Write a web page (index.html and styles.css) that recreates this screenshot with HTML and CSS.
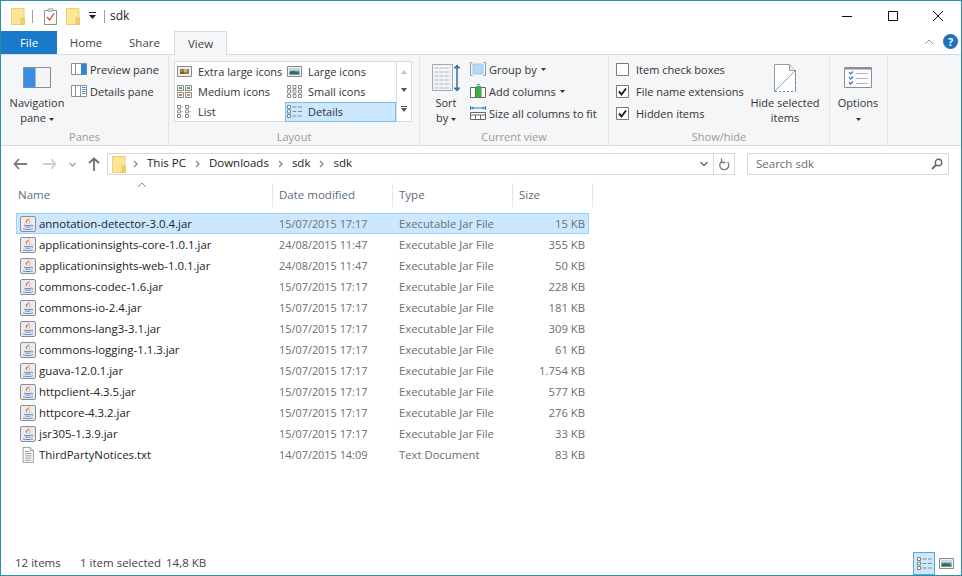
FILE: index.html
```html
<!DOCTYPE html>
<html lang="en-US">
	<head>
		<title>sdk</title>
		<link rel="stylesheet" href="styles.css">
	</head>
	<body>
		<svg class="defs" width="0" height="0">
			<symbol id="folder" viewBox="0 0 14 18">
				<path d="M.5 1.500h12.500v16H.5z" fill="#fde594" stroke="#e8cf83"/>
				<path d="M10 11h3.500v6.500H10z" fill="#f3cf6a" stroke="#dcb95a" stroke-width=".6"/>
			</symbol>
			<symbol id="jar" viewBox="0 0 16 16">
				<rect x=".5" y=".5" width="15" height="15" rx="1.500" fill="#e8edf5" stroke="#8a8c92"/>
				<path d="M9.500 1.500c1 2.200-3.500 3.300-2.500 5.500.3.600.8 1 1.200 1.600C6.800 7.500 4.800 6 6.200 4.300 7.200 3.300 9.500 2.900 9.500 1.500z" fill="#e2701a"/>
				<path d="M11 4C9.300 5 8.600 6.500 9.700 8.600 9.400 7 9.800 5.500 11 4z" fill="#e2701a"/>
				<path d="M4 9.200c2 .6 6 .6 7.500-.2M5 11c1.500.4 4 .4 5.500 0M3 13c3 .8 7 .8 10-.2" fill="none" stroke="#5b7fb5" stroke-width=".9"/>
				<path d="M11.500 9.200c1.500-.4 1.800 1.200 0 1.600" fill="none" stroke="#5b7fb5" stroke-width=".8"/>
			</symbol>
			<symbol id="txt" viewBox="0 0 16 18">
				<path d="M2.500.5h8l3.500 3.500v13.500H2.500z" fill="#fff" stroke="#8f8f8f"/>
				<path d="M10.500.5V4H14" fill="#eee" stroke="#8f8f8f"/>
				<path d="M4.500 5h5M4.500 7.500h7.500M4.500 10h7.500M4.500 12.500h7.500M4.500 15h7.500" stroke="#8a8a8a"/>
			</symbol>
			<symbol id="pane-preview" viewBox="0 0 16 12">
				<path d="M.5.500h15v11H.5z" fill="#fff" stroke="#8a8f96"/>
				<path d="M4.500 1v10" stroke="#8a8f96"/>
				<path d="M10 1h5.500v10.500H10z" fill="#2f84d4"/>
			</symbol>
			<symbol id="pane-details" viewBox="0 0 16 12">
				<path d="M.5.500h15v11H.5z" fill="#fff" stroke="#8a8f96"/>
				<path d="M4.500 1v10M9.500 1v10" stroke="#8a8f96"/>
				<path d="M11 2.500h3.500M11 4.500h3.500M11 6.500h3.500M11 8.500h3.500" stroke="#2f84d4"/>
			</symbol>
			<symbol id="view-xl" viewBox="0 0 15 11">
				<path d="M.5.500h14v10H.5z" fill="#eee" stroke="#8a8a8a"/>
				<path d="M3 3h9v5H3z" fill="#7d8a55"/>
				<path d="M7 3h3v3H7z" fill="#e0b83c"/>
				<path d="M3 6h4v2H3z" fill="#a0522d"/>
			</symbol>
			<symbol id="view-lg" viewBox="0 0 15 11">
				<path d="M.5.500h14v10H.5z" fill="#f4f4f4" stroke="#8a8a8a"/>
				<path d="M2.500 2.500h10v6h-10z" fill="#5f97b8"/>
				<path d="M2.500 2.500h10v2h-10z" fill="#cfe2ec"/>
				<path d="M2.500 6l4-1 6 2v1.500h-10z" fill="#3e6a52"/>
			</symbol>
			<symbol id="view-md" viewBox="0 0 15 13">
				<path d="M.5.500h6v5h-6zM8.500.500h6v5h-6zM.5 7.500h6v5h-6zM8.500 7.500h6v5h-6z" fill="#f4f4f4" stroke="#8a8a8a"/>
				<path d="M2 2h3v2H2z" fill="#6f9a57"/>
				<path d="M10 2h3v2h-3z" fill="#6f9a57"/>
				<path d="M2 9h3v2H2z" fill="#c9803c"/>
				<path d="M10 9h3v2h-3z" fill="#b8a048"/>
			</symbol>
			<symbol id="view-sm" viewBox="0 0 15 13">
				<path d="M.5.500h3v3h-3zM6 .500h3v3H6zM11.500.500h3v3h-3zM.5 5h3v3h-3zM6 5h3v3H6zM11.500 5h3v3h-3zM.5 9.500h3v3h-3zM6 9.500h3v3H6zM11.500 9.500h3v3h-3z" fill="#fff" stroke="#8a8a8a"/>
			</symbol>
			<symbol id="view-list" viewBox="0 0 15 13">
				<path d="M.5.500h3v3h-3zM.5 5h3v3h-3zM.5 9.500h3v3h-3zM8.500.500h3v3h-3zM8.500 5h3v3h-3zM8.500 9.500h3v3h-3z" fill="#fff" stroke="#8a8a8a"/>
				<path d="M4.500 2H6M4.500 6.500H6M4.500 11H6M12.500 2H14M12.500 6.500H14M12.500 11H14" stroke="#b0b0b0"/>
			</symbol>
			<symbol id="view-details" viewBox="0 0 15 13">
				<path d="M.5.500h3v3h-3zM.5 5h3v3h-3zM.5 9.500h3v3h-3z" fill="#fff" stroke="#7f7f7f"/>
				<path d="M5.500 2h4M11 2h4M5.500 6.500h4M11 6.500h4M5.500 11h4M11 11h4" stroke="#8a8a8a"/>
			</symbol>
			<symbol id="check" viewBox="0 0 13 13">
				<path d="M.5.500h12v12H.5z" fill="#fff" stroke="#7a7a7a"/>
				<path d="M3 6.500l2.500 3L10 3.500" fill="none" stroke="#222" stroke-width="2"/>
			</symbol>
			<symbol id="caret" viewBox="0 0 5 3">
				<path d="M0 0h5L2.500 3z" fill="#333"/>
			</symbol>
			<symbol id="chev" viewBox="0 0 5 8">
				<path d="M1 1l3 3-3 3" fill="none" stroke="#8a8a8a" stroke-width="1.400"/>
			</symbol>
		</svg>

		<div class="window">
			<div class="title-bar">
				<svg class="qat-folder"><use href="#folder"/></svg>
				<span class="qat-sep"></span>
				<svg class="qat-props" viewBox="0 0 13 17">
					<path d="M.5 2.500h12v14H.5z" fill="#fff" stroke="#8f8f8f"/>
					<path d="M4 .8h5v2.500H4z" fill="#ddd" stroke="#8f8f8f" stroke-width=".6"/>
					<path d="M3 9l2.500 3L10 5.500" fill="none" stroke="#cf4a3a" stroke-width="1.300"/>
				</svg>
				<svg class="qat-folder qat-folder-2"><use href="#folder"/></svg>
				<svg class="qat-drop" viewBox="0 0 7 8">
					<path d="M0 .5h7" stroke="#222"/>
					<path d="M0 3h7L3.500 7z" fill="#222"/>
				</svg>
				<span class="qat-sep qat-sep-2"></span>
				<span class="title-text">sdk</span>
				<div class="win-btns">
					<div class="win-btn"><svg width="12" height="12"><path d="M1 6.500h10" stroke="#111"/></svg></div>
					<div class="win-btn"><svg width="12" height="12"><path d="M1.500 1.500h9v9h-9z" fill="none" stroke="#111"/></svg></div>
					<div class="win-btn"><svg width="12" height="12"><path d="M1 1l10 10M11 1L1 11" stroke="#111"/></svg></div>
				</div>
			</div>

			<div class="tab-bar">
				<div class="tab tab-file">File</div>
				<div class="tab tab-home">Home</div>
				<div class="tab tab-share">Share</div>
				<div class="tab tab-view">View</div>
				<div class="tab-right">
					<svg class="collapse" width="10" height="6"><path d="M1 5l4-4 4 4" fill="none" stroke="#9a9a9a"/></svg>
					<span class="help">?</span>
				</div>
			</div>

			<div class="ribbon">
				<div class="group group-panes">
					<div class="group-body">
						<div class="big-btn nav-btn">
							<div class="big-icon">
								<svg width="28" height="21" viewBox="0 0 28 21">
									<path d="M.5.500h27v20H.5z" fill="#f4f4f4" stroke="#8a8f96"/>
									<path d="M1 1h11.500v19.500H1z" fill="#3a8ee0"/>
								</svg>
							</div>
							<div class="big-text">Navigation<br>pane <svg class="caret"><use href="#caret"/></svg></div>
						</div>
						<div class="small-col">
							<div class="small-btn"><svg class="small-icon"><use href="#pane-preview"/></svg>Preview pane</div>
							<div class="small-btn"><svg class="small-icon"><use href="#pane-details"/></svg>Details pane</div>
						</div>
					</div>
					<div class="group-label">Panes</div>
				</div>

				<div class="group group-layout">
					<div class="group-body">
						<div class="gallery">
							<div class="gallery-grid">
								<div class="gallery-item"><svg class="gallery-icon"><use href="#view-xl"/></svg>Extra large icons</div>
								<div class="gallery-item"><svg class="gallery-icon"><use href="#view-lg"/></svg>Large icons</div>
								<div class="gallery-item"><svg class="gallery-icon"><use href="#view-md"/></svg>Medium icons</div>
								<div class="gallery-item"><svg class="gallery-icon"><use href="#view-sm"/></svg>Small icons</div>
								<div class="gallery-item"><svg class="gallery-icon"><use href="#view-list"/></svg>List</div>
								<div class="gallery-item selected"><svg class="gallery-icon"><use href="#view-details"/></svg>Details</div>
							</div>
							<div class="gallery-scroll">
								<svg width="7" height="5"><path d="M0 4h6L3 0z" fill="#c4c4c4"/></svg>
								<svg width="7" height="5"><path d="M0 0h6L3 4z" fill="#555"/></svg>
								<svg width="7" height="7"><path d="M0 .5h6" stroke="#555"/><path d="M0 2h6L3 6z" fill="#555"/></svg>
							</div>
						</div>
					</div>
					<div class="group-label">Layout</div>
				</div>

				<div class="group group-current">
					<div class="group-body">
						<div class="big-btn sort-btn">
							<div class="big-icon">
								<svg width="29" height="28" viewBox="0 0 29 28">
									<path d="M.5.500h20v26H.5z" fill="#f2f4f6" stroke="#a4a8ac"/>
									<path d="M2.500 4h16M2.500 8h16M2.500 12h16M2.500 16h16M2.500 20h16M2.500 24h16" stroke="#b4b8bc" stroke-dasharray="4 1"/>
									<path d="M25 2v24" stroke="#3a78b4" stroke-width="1.600"/>
									<path d="M22 4l3-3 3 3zM22 24l3 3 3-3z" fill="#3a78b4" stroke="#3a78b4"/>
								</svg>
							</div>
							<div class="big-text">Sort<br>by <svg class="caret"><use href="#caret"/></svg></div>
						</div>
						<div class="small-col cv-col">
							<div class="small-btn">
								<svg class="cv-icon" viewBox="0 0 16 14"><path d="M2.500.5h-2v13h2M13.500.5h2v13h-2" fill="none" stroke="#7f9db8"/><path d="M3 2h10v10H3z" fill="#b5d9f3" stroke="#a0c8e8"/></svg>
								Group by <svg class="caret"><use href="#caret"/></svg>
							</div>
							<div class="small-btn">
								<svg class="cv-icon" viewBox="0 0 16 14"><path d="M.5 3.500h15v10H.5z" fill="#fff" stroke="#666"/><path d="M5.500 4v9M11 4v9" stroke="#666"/><path d="M6 2h5v11.500H6z" fill="#35b53a"/><path d="M7 0h3L8.500 2z" fill="#3a78b4"/></svg>
								Add columns <svg class="caret"><use href="#caret"/></svg>
							</div>
							<div class="small-btn">
								<svg class="cv-icon" viewBox="0 0 16 14"><path d="M.5 0v4M15.500 0v4M1 2h14" stroke="#2a86c8"/><path d="M1 2l2.500-1.500v3zM15 2l-2.500-1.500v3z" fill="#2a86c8"/><path d="M.5 6.500h15v7H.5zM1 9h14M5.500 9v4.500M10.500 9v4.500" fill="#fff" stroke="#666"/></svg>
								Size all columns to fit
							</div>
						</div>
					</div>
					<div class="group-label">Current view</div>
				</div>

				<div class="group group-show">
					<div class="group-body">
						<div class="small-col check-col">
							<div class="small-btn"><svg class="check"><path d="M.5.500h12v12H.5z" fill="#fff" stroke="#7a7a7a"/></svg>Item check boxes</div>
							<div class="small-btn"><svg class="check"><use href="#check"/></svg>File name extensions</div>
							<div class="small-btn"><svg class="check"><use href="#check"/></svg>Hidden items</div>
						</div>
						<div class="big-btn hide-btn">
							<div class="big-icon">
								<svg width="22" height="28" viewBox="0 0 22 28">
									<path d="M.5 27V.5h15l6 6V27" fill="#fff" stroke="#9a9a9a"/>
									<path d="M15.500.5v6h6" fill="#eee" stroke="#9a9a9a"/>
									<path d="M.5 27.500L21 7" stroke="#9a9a9a"/>
									<path d="M1 27.500h20.500V7" fill="none" stroke="#4a8fc4" stroke-dasharray="2 2"/>
								</svg>
							</div>
							<div class="big-text">Hide selected<br>items</div>
						</div>
					</div>
					<div class="group-label">Show/hide</div>
				</div>

				<div class="group group-options">
					<div class="group-body">
						<div class="big-btn options-btn">
							<div class="big-icon">
								<svg width="28" height="21" viewBox="0 0 28 21">
									<path d="M.5.500h27v20H.5z" fill="#fbfcfd" stroke="#8a8f96"/>
									<path d="M1 1h26v1.500H1z" fill="#8a8f96"/>
									<path d="M5 5l1.500 2L9 4.500M5 10l1.500 2L9 9.500M5 15l1.500 2L9 14.500" fill="none" stroke="#3a78b4" stroke-width="1.200"/>
									<path d="M12 6.500h12M12 11.500h12M12 16.500h12" stroke="#b4b8bc"/>
								</svg>
							</div>
							<div class="big-text">Options<br><svg class="caret"><use href="#caret"/></svg></div>
						</div>
					</div>
				</div>
			</div>

			<div class="address-row">
				<div class="nav-arrows">
					<svg class="arrow-back" width="14" height="12" viewBox="0 0 14 12"><path d="M6 1L1.500 6 6 11M2 6h12" fill="none" stroke="#7a7a7a" stroke-width="1.800"/></svg>
					<svg class="arrow-fwd" width="14" height="12" viewBox="0 0 14 12"><path d="M8 1l4.500 5L8 11M12 6H0" fill="none" stroke="#d0d0d0" stroke-width="1.800"/></svg>
					<svg class="arrow-down" width="7" height="5" viewBox="0 0 7 5"><path d="M.5 1l3 3 3-3" fill="none" stroke="#a0a0a0" stroke-width="1.300"/></svg>
					<svg class="arrow-up" width="12" height="14" viewBox="0 0 12 14"><path d="M1 6l5-4.500L11 6M6 2v12" fill="none" stroke="#6f6f6f" stroke-width="1.800"/></svg>
				</div>
				<div class="address-box">
					<svg class="crumb-folder"><use href="#folder"/></svg>
					<svg class="chev"><use href="#chev"/></svg>
					<span class="crumb">This PC</span>
					<svg class="chev"><use href="#chev"/></svg>
					<span class="crumb">Downloads</span>
					<svg class="chev"><use href="#chev"/></svg>
					<span class="crumb">sdk</span>
					<svg class="chev"><use href="#chev"/></svg>
					<span class="crumb">sdk</span>
					<svg class="addr-drop" width="8" height="6" viewBox="0 0 8 6"><path d="M.5 1l3.500 3.500L7.500 1" fill="none" stroke="#666" stroke-width="1.300"/></svg>
					<div class="addr-refresh">
						<svg width="11" height="13" viewBox="0 0 11 13"><path d="M8.500 4A4.500 4.500 0 1 1 3 3.300" fill="none" stroke="#777" stroke-width="1.300"/><path d="M2.500.5v4h4" fill="none" stroke="#777" stroke-width="1.300"/></svg>
					</div>
				</div>
				<div class="search-box">
					<span class="search-text">Search sdk</span>
					<svg width="12" height="12" viewBox="0 0 12 12"><circle cx="7.500" cy="4.500" r="3.200" fill="none" stroke="#666" stroke-width="1.400"/><path d="M5 7l-4 4" stroke="#666" stroke-width="1.800"/></svg>
				</div>
			</div>

			<div class="file-head">
				<svg class="sort-mark" width="10" height="6"><path d="M1 5l4-4 4 4" fill="none" stroke="#8a8a8a"/></svg>
				<div class="col-head col-name">Name</div>
				<div class="col-head">Date modified</div>
				<div class="col-head">Type</div>
				<div class="col-head">Size</div>
			</div>

			<div class="file-list">
				<div class="file-row selected-row"><div class="file-name"><svg class="file-icon"><use href="#jar"/></svg>annotation-detector-3.0.4.jar</div><div class="file-cell file-date">15/07/2015 17:17</div><div class="file-cell">Executable Jar File</div><div class="file-cell file-size">15 KB</div></div>
				<div class="file-row"><div class="file-name"><svg class="file-icon"><use href="#jar"/></svg>applicationinsights-core-1.0.1.jar</div><div class="file-cell file-date">24/08/2015 11:47</div><div class="file-cell">Executable Jar File</div><div class="file-cell file-size">355 KB</div></div>
				<div class="file-row"><div class="file-name"><svg class="file-icon"><use href="#jar"/></svg>applicationinsights-web-1.0.1.jar</div><div class="file-cell file-date">24/08/2015 11:47</div><div class="file-cell">Executable Jar File</div><div class="file-cell file-size">50 KB</div></div>
				<div class="file-row"><div class="file-name"><svg class="file-icon"><use href="#jar"/></svg>commons-codec-1.6.jar</div><div class="file-cell file-date">15/07/2015 17:17</div><div class="file-cell">Executable Jar File</div><div class="file-cell file-size">228 KB</div></div>
				<div class="file-row"><div class="file-name"><svg class="file-icon"><use href="#jar"/></svg>commons-io-2.4.jar</div><div class="file-cell file-date">15/07/2015 17:17</div><div class="file-cell">Executable Jar File</div><div class="file-cell file-size">181 KB</div></div>
				<div class="file-row"><div class="file-name"><svg class="file-icon"><use href="#jar"/></svg>commons-lang3-3.1.jar</div><div class="file-cell file-date">15/07/2015 17:17</div><div class="file-cell">Executable Jar File</div><div class="file-cell file-size">309 KB</div></div>
				<div class="file-row"><div class="file-name"><svg class="file-icon"><use href="#jar"/></svg>commons-logging-1.1.3.jar</div><div class="file-cell file-date">15/07/2015 17:17</div><div class="file-cell">Executable Jar File</div><div class="file-cell file-size">61 KB</div></div>
				<div class="file-row"><div class="file-name"><svg class="file-icon"><use href="#jar"/></svg>guava-12.0.1.jar</div><div class="file-cell file-date">15/07/2015 17:17</div><div class="file-cell">Executable Jar File</div><div class="file-cell file-size">1.754 KB</div></div>
				<div class="file-row"><div class="file-name"><svg class="file-icon"><use href="#jar"/></svg>httpclient-4.3.5.jar</div><div class="file-cell file-date">15/07/2015 17:17</div><div class="file-cell">Executable Jar File</div><div class="file-cell file-size">577 KB</div></div>
				<div class="file-row"><div class="file-name"><svg class="file-icon"><use href="#jar"/></svg>httpcore-4.3.2.jar</div><div class="file-cell file-date">15/07/2015 17:17</div><div class="file-cell">Executable Jar File</div><div class="file-cell file-size">276 KB</div></div>
				<div class="file-row"><div class="file-name"><svg class="file-icon"><use href="#jar"/></svg>jsr305-1.3.9.jar</div><div class="file-cell file-date">15/07/2015 17:17</div><div class="file-cell">Executable Jar File</div><div class="file-cell file-size">33 KB</div></div>
				<div class="file-row"><div class="file-name"><svg class="file-icon"><use href="#txt"/></svg>ThirdPartyNotices.txt</div><div class="file-cell file-date">14/07/2015 14:09</div><div class="file-cell">Text Document</div><div class="file-cell file-size">83 KB</div></div>
			</div>

			<div class="status-bar">
				<span class="status-count">12 items</span>
				<span class="status-selected">1 item selected</span>
				<span>14,8 KB</span>
				<div class="view-toggle">
					<div class="toggle-btn toggle-on"><svg width="15" height="13"><use href="#view-details"/></svg></div>
					<div class="toggle-btn"><svg width="15" height="11"><use href="#view-lg"/></svg></div>
				</div>
			</div>
		</div>
	</body>
</html>
```

FILE: styles.css
```css
* {
	font-family: "Open Sans", "Noto Sans", sans-serif;
	box-sizing: border-box;
}
html, body {
	margin: 0;
	height: 100%;
	overflow: hidden;
}
body {
	font-size: 11.5px;
	color: #333;
	background: white;
}
svg {
	display: block;
	flex: none;
}
.defs {
	position: absolute;
}

.window {
	width: 962px;
	height: 576px;
	border: 1px solid #2b8cab;
	display: flex;
	flex-direction: column;
}

/* title bar */
.title-bar {
	height: 30px;
	display: flex;
	align-items: center;
	padding-left: 10px;
}
.qat-folder {
	width: 14px;
	height: 18px;
}
.qat-folder-2 {
	margin-left: 9px;
}
.qat-sep {
	width: 1px;
	height: 13px;
	background: #a0a0a0;
	margin-left: 7px;
}
.qat-sep-2 {
	margin-left: 8px;
}
.qat-props {
	width: 13px;
	height: 17px;
	margin-left: 11px;
}
.qat-drop {
	width: 7px;
	height: 8px;
	margin-left: 9px;
}
.title-text {
	margin-left: 5px;
	padding-bottom: 2px;
	font-size: 12px;
	color: #222;
}
.win-btns {
	display: flex;
	margin-left: auto;
}
.win-btn {
	width: 45.500px;
	height: 30px;
	display: flex;
	align-items: center;
	justify-content: center;
}

/* tabs */
.tab-bar {
	height: 23px;
	display: flex;
	align-items: stretch;
}
.tab {
	display: flex;
	align-items: center;
	justify-content: center;
	color: #444;
}
.tab-file {
	width: 56px;
	background: #1979ca;
	color: white;
}
.tab-home {
	width: 58px;
}
.tab-share {
	width: 59px;
}
.tab-view {
	width: 53px;
	height: 24px;
	background: #f5f6f7;
	border: 1px solid #dadbdc;
	border-bottom: 0;
	position: relative;
	z-index: 1;
}
.tab-right {
	margin-left: auto;
	display: flex;
	align-items: center;
	padding-right: 3px;
	padding-bottom: 2px;
}
.collapse {
	margin-right: 9px;
}
.help {
	width: 15px;
	height: 15px;
	border-radius: 50%;
	background: #1c72bd;
	color: white;
	font-size: 11px;
	font-weight: bold;
	line-height: 15px;
	text-align: center;
}

/* ribbon */
.ribbon {
	height: 92px;
	display: flex;
	font-size: 11px;
	background: #f5f6f7;
	border-top: 1px solid #dadbdc;
	border-bottom: 1px solid #dadbdc;
	padding-top: 1px;
}
.group {
	height: 89px;
	border-right: 1px solid #e2e3e4;
	display: flex;
	flex-direction: column;
}
.group-panes {
	width: 168px;
}
.group-layout {
	width: 251px;
}
.group-current {
	width: 189px;
}
.group-show {
	width: 221px;
}
.group-options {
	width: 58px;
}
.group-body {
	height: 73px;
	padding-top: 2px;
	display: flex;
}
.group-label {
	height: 16px;
	line-height: 16px;
	text-align: center;
	color: #999;
}

.big-btn {
	display: flex;
	flex-direction: column;
	align-items: center;
	color: #333;
}
.big-text {
	line-height: 15px;
	text-align: center;
	white-space: nowrap;
}
.big-icon {
	height: 37px;
	padding-top: 2px;
	display: flex;
	align-items: center;
	justify-content: center;
}
.nav-btn {
	width: 58px;
	margin-left: 7px;
}
.sort-btn {
	width: 36px;
	margin-left: 8px;
}
.hide-btn {
	width: 82px;
	margin-left: 1px;
}
.options-btn {
	width: 56px;
}
.caret {
	display: inline-block;
	vertical-align: middle;
	width: 5px;
	height: 3px;
}

.small-col {
	display: flex;
	flex-direction: column;
	margin-left: 5px;
}
.cv-col {
	margin-left: 6px;
}
.check-col {
	width: 127px;
	margin-left: 7px;
}
.small-btn {
	height: 22px;
	display: flex;
	align-items: center;
	white-space: nowrap;
	color: #333;
}
.small-icon {
	width: 16px;
	height: 12px;
	margin-right: 3px;
}
.cv-icon {
	width: 16px;
	height: 14px;
	margin-right: 3px;
}
.small-btn .caret {
	margin-left: 4px;
}
.check {
	width: 13px;
	height: 13px;
	margin-right: 7px;
}

.gallery {
	margin-left: 5px;
	width: 238px;
	height: 61px;
	margin-top: 3px;
	background: white;
	border: 1px solid #dadbdc;
	display: flex;
}
.gallery-grid {
	width: 221px;
	display: grid;
	grid-template-columns: 110px 111px;
	grid-auto-rows: 20px;
}
.gallery-item {
	display: flex;
	align-items: center;
	padding: 0 0 2px 2px;
	white-space: nowrap;
}
.gallery-item.selected {
	background: #cce8ff;
	box-shadow: inset 0 0 0 1px #7dbde8;
}
.gallery-icon {
	width: 15px;
	height: 13px;
	margin-right: 6px;
}
.gallery-scroll {
	flex: 1;
	border-left: 1px solid #dadbdc;
	display: flex;
	flex-direction: column;
	align-items: center;
	justify-content: space-around;
	padding: 2px 0;
}

/* address bar */
.address-row {
	height: 37px;
	padding-top: 7px;
	display: flex;
	align-items: flex-start;
}
.nav-arrows {
	width: 106px;
	height: 22px;
	display: flex;
	align-items: center;
	padding-left: 12px;
}
.arrow-fwd {
	margin-left: 16px;
}
.arrow-down {
	margin-left: 12px;
}
.arrow-up {
	margin-left: 12px;
}
.address-box {
	width: 628px;
	height: 22px;
	border: 1px solid #d9d9d9;
	display: flex;
	align-items: center;
	padding-left: 4px;
	color: #222;
}
.crumb-folder {
	width: 14px;
	height: 18px;
	margin-right: -2px;
}
.chev {
	width: 5px;
	height: 8px;
	margin: 0 9px;
}
.crumb {
	padding-bottom: 3px;
}
.addr-drop {
	margin-left: auto;
	margin-right: 5px;
}
.addr-refresh {
	width: 21px;
	height: 100%;
	border-left: 1px solid #d9d9d9;
	display: flex;
	align-items: center;
	justify-content: center;
}
.search-box {
	width: 202px;
	height: 22px;
	margin-left: 12px;
	border: 1px solid #d9d9d9;
	display: flex;
	align-items: center;
	justify-content: space-between;
	padding: 0 5px 0 8px;
	color: #6d6d6d;
}
.search-text {
	padding-bottom: 2px;
}

/* file list */
.file-head {
	height: 24px;
	display: grid;
	grid-template-columns: 272px 120px 120px 80px;
	position: relative;
	color: #5b6b7e;
}
.sort-mark {
	position: absolute;
	left: 136px;
	top: -1px;
}
.col-head {
	display: flex;
	align-items: center;
	padding: 0 0 2px 6px;
	border-right: 1px solid #e5e5e5;
}
.col-name {
	padding-left: 17px;
}
.file-list {
	margin-top: 6px;
	margin-left: 15px;
	width: 573px;
	font-size: 11.3px;
}
.file-row {
	height: 21px;
	display: grid;
	grid-template-columns: 256px 120px 120px 77px;
	align-items: center;
}
.selected-row {
	background: #cce8ff;
	box-shadow: inset 0 0 0 1px #99d1ff;
}
.file-name {
	display: flex;
	align-items: center;
	padding-left: 4px;
	font-size: 11.4px;
	color: #222;
	white-space: nowrap;
}
.file-icon {
	width: 16px;
	height: 16px;
	margin-right: 3px;
}
.file-cell {
	padding-left: 7px;
	color: #6d6d6d;
	white-space: nowrap;
}
.file-date {
	font-size: 10.9px;
}
.file-size {
	text-align: right;
	padding-right: 4px;
}

/* status bar */
.status-bar {
	margin-top: auto;
	height: 23px;
	display: flex;
	align-items: center;
	padding-left: 14px;
	color: #444;
}
.status-bar span {
	padding-bottom: 2px;
}
.status-count {
	width: 65px;
}
.status-selected {
	width: 86px;
}
.view-toggle {
	margin-left: auto;
	display: flex;
	margin-right: 4px;
	align-self: stretch;
}
.toggle-btn {
	width: 22px;
	display: flex;
	align-items: center;
	justify-content: center;
}
.toggle-on {
	background: #cce8ff;
	box-shadow: inset 0 0 0 1px #5fa8cf;
}
```
